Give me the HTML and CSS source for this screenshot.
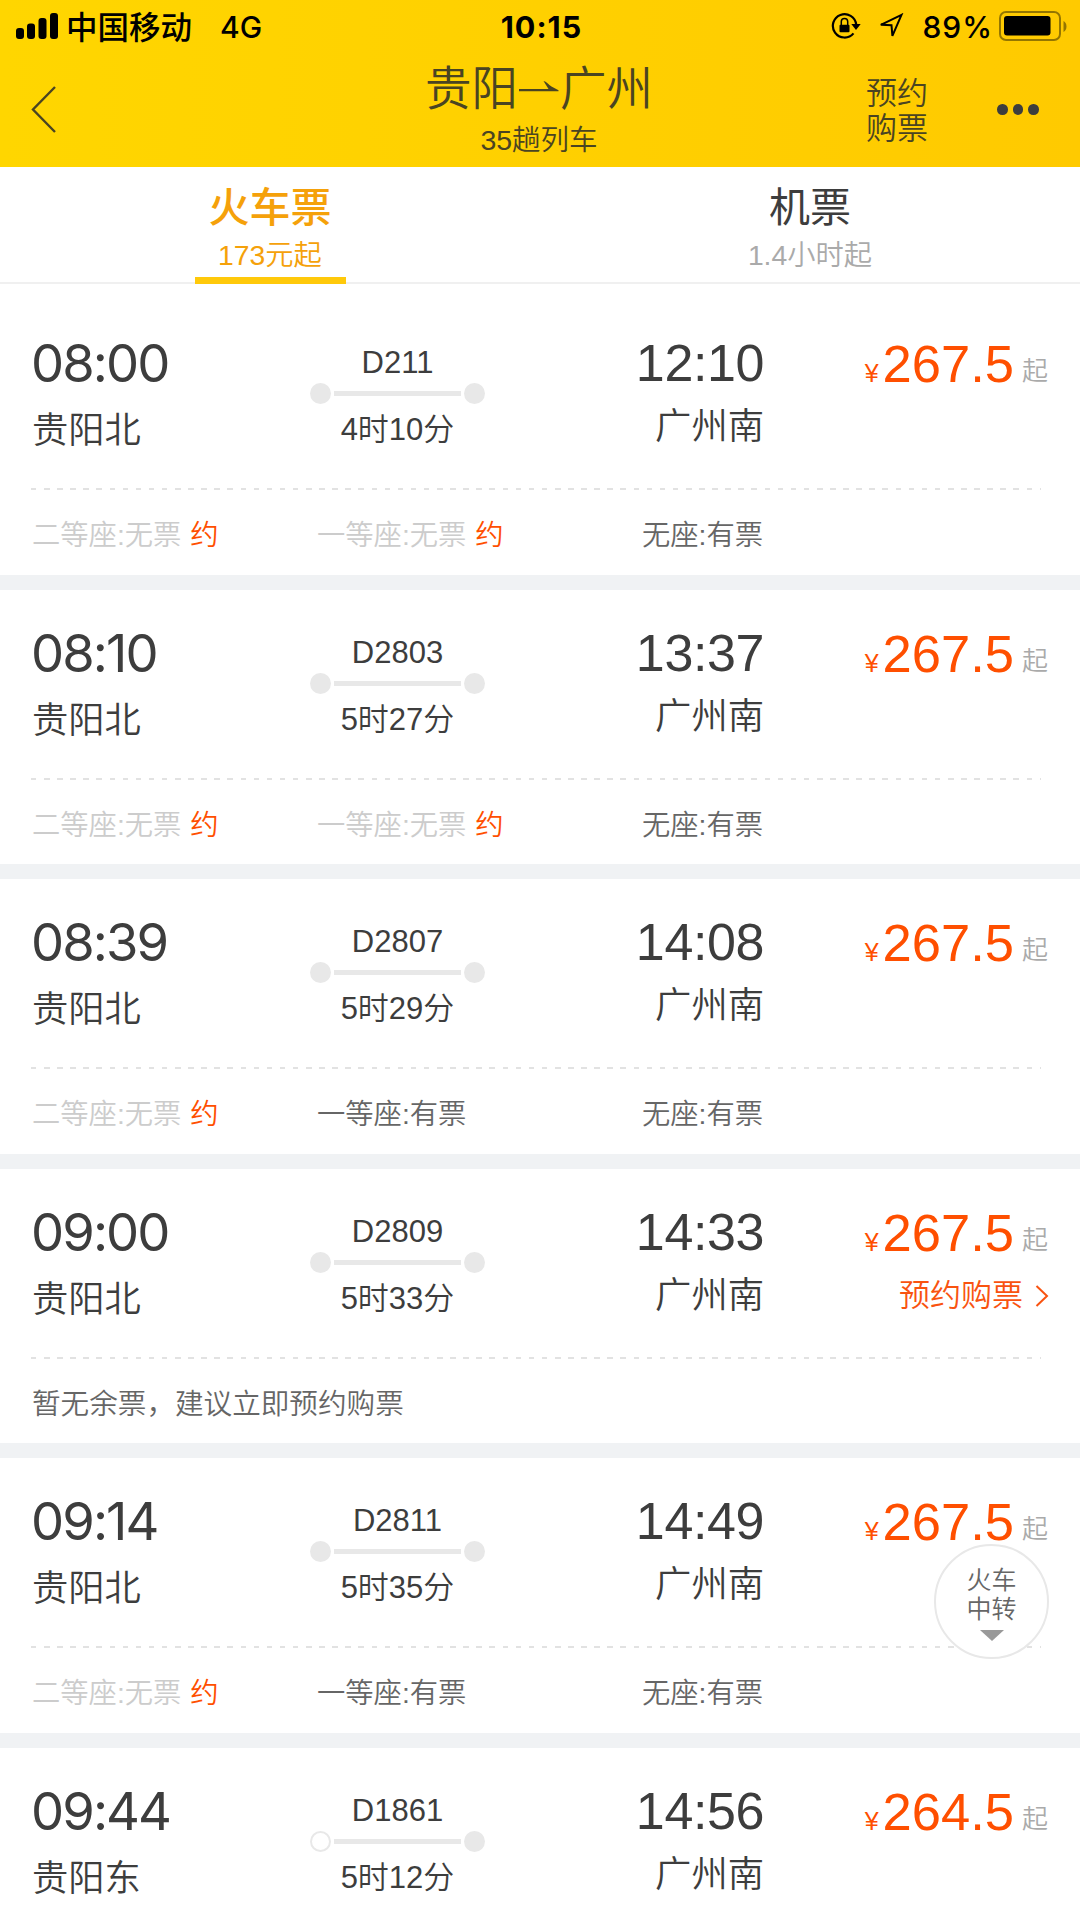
FILE: index.html
```html
<!DOCTYPE html>
<html lang="zh-CN">
<head>
  <meta charset="UTF-8" />
  <meta name="viewport" content="width=device-width, initial-scale=1.0"/>
  <title>贵阳→广州 火车票</title>
  <link rel="stylesheet" href="styles.css">
</head>
<body>
  <header class="header">
    <div class="status">
      <div class="status-left">
        <svg class="signal" width="42" height="26" viewBox="0 0 42 26">
          <rect x="0" y="15" width="8" height="11" rx="3"/>
          <rect x="11" y="10.5" width="8" height="15.5" rx="3"/>
          <rect x="22.5" y="5" width="8" height="21" rx="3"/>
          <rect x="34" y="0" width="8" height="26" rx="3"/>
        </svg>
        <span class="carrier">中国移动</span>
        <span class="network">4G</span>
      </div>
      <div class="clock">10:15</div>
      <div class="status-right">
        <svg class="lock" width="30" height="28" viewBox="0 0 30 28">
          <path d="M22.5 21.4A11.7 11.7 0 1 1 25.2 12.5" fill="none" stroke="#000" stroke-width="2.2"/>
          <path d="M20.3 12h9.4L25 18z"/>
          <rect x="8.5" y="12.8" width="10" height="7.4" rx="1"/>
          <path d="M10.3 13V9.6a3.2 3.2 0 0 1 6.4 0V13" fill="none" stroke="#000" stroke-width="1.5"/>
        </svg>
        <svg class="location" width="26" height="26" viewBox="0 0 26 26">
          <path d="M23.5 1.8L2.8 11.8l10.7.4.9 10.6z" fill="none" stroke="#000" stroke-width="2" stroke-linejoin="miter"/>
        </svg>
        <span class="percent">89%</span>
        <svg class="battery" width="70" height="30" viewBox="0 0 70 30">
          <rect x="1" y="1" width="60" height="28" rx="6" fill="none" stroke="#000" stroke-opacity=".42" stroke-width="2"/>
          <rect x="5" y="5" width="46.500" height="19.500" rx="3"/>
          <path d="M64.500 10c4 2 4 9 0 11z" fill-opacity=".42"/>
        </svg>
      </div>
    </div>
    <div class="nav">
      <svg class="back" width="26" height="50" viewBox="0 0 26 50"><path d="M24 2L2 24.500L24 47" fill="none" stroke="#4a4422" stroke-width="2.400"/></svg>
      <div class="title">
        <h1>贵阳<svg width="40" height="14" viewBox="0 0 40 14"><path d="M0 9h29.500L24.500 1c3 .6 5 3.500 8 5.600l7 3.600v1.100H0z" fill="#4a4422"/></svg>广州</h1>
        <p>35趟列车</p>
      </div>
      <a class="reserve">预约<br>购票</a>
      <div class="more"><i></i><i></i><i></i></div>
    </div>
  </header>

  <div class="tabs">
    <div class="tab active">
      <b>火车票</b>
      <span>173元起</span>
    </div>
    <div class="tab">
      <b>机票</b>
      <span>1.4小时起</span>
    </div>
  </div>

  <main class="list">
    <section class="card">
      <div class="trip">
        <div class="from"><div class="time">08:00</div><div class="station">贵阳北</div></div>
        <div class="route"><div class="train">D211</div><div class="track"><i></i><s></s><i></i></div><div class="duration">4时10分</div></div>
        <div class="to"><div class="time">12:10</div><div class="station">广州南</div></div>
        <div class="side"><div class="price"><em>¥</em><strong>267.5</strong><small>起</small></div></div>
      </div>
      <div class="divider"></div>
      <div class="seats">
        <span class="none">二等座:无票<u>约</u></span>
        <span class="none">一等座:无票<u>约</u></span>
        <span>无座:有票</span>
      </div>
    </section>

    <section class="card">
      <div class="trip">
        <div class="from"><div class="time">08:10</div><div class="station">贵阳北</div></div>
        <div class="route"><div class="train">D2803</div><div class="track"><i></i><s></s><i></i></div><div class="duration">5时27分</div></div>
        <div class="to"><div class="time">13:37</div><div class="station">广州南</div></div>
        <div class="side"><div class="price"><em>¥</em><strong>267.5</strong><small>起</small></div></div>
      </div>
      <div class="divider"></div>
      <div class="seats">
        <span class="none">二等座:无票<u>约</u></span>
        <span class="none">一等座:无票<u>约</u></span>
        <span>无座:有票</span>
      </div>
    </section>

    <section class="card">
      <div class="trip">
        <div class="from"><div class="time">08:39</div><div class="station">贵阳北</div></div>
        <div class="route"><div class="train">D2807</div><div class="track"><i></i><s></s><i></i></div><div class="duration">5时29分</div></div>
        <div class="to"><div class="time">14:08</div><div class="station">广州南</div></div>
        <div class="side"><div class="price"><em>¥</em><strong>267.5</strong><small>起</small></div></div>
      </div>
      <div class="divider"></div>
      <div class="seats">
        <span class="none">二等座:无票<u>约</u></span>
        <span>一等座:有票</span>
        <span>无座:有票</span>
      </div>
    </section>

    <section class="card">
      <div class="trip">
        <div class="from"><div class="time">09:00</div><div class="station">贵阳北</div></div>
        <div class="route"><div class="train">D2809</div><div class="track"><i></i><s></s><i></i></div><div class="duration">5时33分</div></div>
        <div class="to"><div class="time">14:33</div><div class="station">广州南</div></div>
        <div class="side">
          <div class="price"><em>¥</em><strong>267.5</strong><small>起</small></div>
          <a class="book">预约购票<svg width="14" height="22" viewBox="0 0 14 22"><path d="M1.500 1l10.500 10L1.500 21" fill="none" stroke="#f95310" stroke-width="2"/></svg></a>
        </div>
      </div>
      <div class="divider"></div>
      <div class="seats notice">暂无余票，建议立即预约购票</div>
    </section>

    <section class="card">
      <div class="trip">
        <div class="from"><div class="time">09:14</div><div class="station">贵阳北</div></div>
        <div class="route"><div class="train">D2811</div><div class="track"><i></i><s></s><i></i></div><div class="duration">5时35分</div></div>
        <div class="to"><div class="time">14:49</div><div class="station">广州南</div></div>
        <div class="side"><div class="price"><em>¥</em><strong>267.5</strong><small>起</small></div></div>
      </div>
      <div class="divider"></div>
      <div class="seats">
        <span class="none">二等座:无票<u>约</u></span>
        <span>一等座:有票</span>
        <span>无座:有票</span>
      </div>
    </section>

    <section class="card last">
      <div class="trip">
        <div class="from"><div class="time">09:44</div><div class="station">贵阳东</div></div>
        <div class="route"><div class="train">D1861</div><div class="track"><i class="hollow"></i><s></s><i></i></div><div class="duration">5时12分</div></div>
        <div class="to"><div class="time">14:56</div><div class="station">广州南</div></div>
        <div class="side"><div class="price"><em>¥</em><strong>264.5</strong><small>起</small></div></div>
      </div>
    </section>
  </main>

  <!-- floating transfer button -->
  <div class="transfer">
    火车<br>中转
    <svg width="24" height="11" viewBox="0 0 24 11"><path d="M0 0h24L12 11z" fill="#999"/></svg>
  </div>
</body>
</html>
```

FILE: styles.css
```css
* {
  box-sizing: border-box;
}
body {
  margin: 0;
  position: relative;
  width: 1080px;
  height: 1920px;
  overflow: hidden;
  background: #fff;
  color: #3d3d3d;
  font-family: "Liberation Sans", "Noto Sans CJK SC", sans-serif;
  font-weight: 350;
}
h1, p {
  margin: 0;
  font-weight: 350;
}
i, em, small, b, strong, u, s {
  font-style: normal;
  font-weight: inherit;
  text-decoration: none;
}
svg {
  display: block;
}

/* header */
.header {
  height: 166.5px;
  background: linear-gradient(90deg, #ffd600, #ffca00);
  color: #4a4422;
}
.status {
  display: grid;
  grid-template-columns: 1fr auto 1fr;
  height: 54px;
  padding: 0 12px 0 16px;
  color: #000;
  font-family: Inter, "Noto Sans CJK SC", sans-serif;
  font-weight: 500;
  line-height: 54px;
}
.status-left, .status-right {
  display: flex;
}
.status-right {
  justify-content: flex-end;
}
.signal {
  margin-top: 13px;
}
.carrier {
  margin-left: 8px;
  font-size: 31.5px;
  line-height: 56px;
}
.network {
  margin-left: 28px;
  font-size: 30px;
}
.clock {
  padding-right: 1px;
  font-size: 30.5px;
  font-weight: 700;
  letter-spacing: 1px;
}
.lock {
  margin: 12px 17px 0 0;
}
.location {
  margin: 13px 18px 0 0;
}
.percent {
  margin-right: 6px;
  font-size: 30px;
  letter-spacing: 1px;
}
.battery {
  margin: 11px -1px 0 0;
}
.nav {
  display: grid;
  grid-template-columns: 425px 228px 213px 60px 1fr;
  height: 112px;
}
.back {
  margin: 31px 0 0 31px;
}
.title {
  text-align: center;
}
.title h1 {
  display: flex;
  justify-content: center;
  align-items: center;
  height: 56px;
  padding-top: 13px;
  font-size: 46.5px;
  line-height: 46px;
  white-space: nowrap;
}
.title h1 svg {
  margin: 0 1px 4px;
}
.title p {
  margin-top: 14px;
  font-size: 28.5px;
  line-height: 32px;
}
.reserve {
  grid-column: 4;
  padding-top: 21.5px;
  font-size: 31px;
  line-height: 35.5px;
  white-space: nowrap;
}
.more {
  display: flex;
  gap: 5px;
  padding: 50px 0 0 71px;
}
.more i {
  width: 10.5px;
  height: 10.5px;
  border-radius: 50%;
  background: #3d3d3d;
}

/* tabs */
.tabs {
  display: grid;
  grid-template-columns: 1fr 1fr;
  height: 117.5px;
  box-shadow: inset 0 -2px #f0f0f0;
}
.tab {
  display: flex;
  flex-direction: column;
  align-items: center;
  width: 151px;
  margin: 0 auto;
  padding-top: 18px;
  white-space: nowrap;
}
.tab b {
  font-size: 41px;
  font-weight: 400;
  line-height: 46px;
}
.tab span {
  margin-top: 7px;
  color: #aaa;
  font-size: 28.3px;
  line-height: 34px;
}
.tab.active {
  border-bottom: 7px solid #ffc90a;
}
.tab.active b {
  color: #f5a10a;
  font-weight: 500;
}
.tab.active span {
  color: #f5a10a;
}

/* train list */
.list {
  padding-top: 16px;
}
.card {
  height: 289.6px;
  border-bottom: 15.3px solid #f0f2f4;
}
.card.last {
  height: 172px;
  border-bottom: 0;
  overflow: hidden;
}
.trip {
  display: grid;
  grid-template-columns: 278px 175px 279px 284px;
  height: 188px;
  padding: 35px 32px 0;
}
.time {
  font-size: 52px;
  line-height: 57px;
  letter-spacing: -0.4px;
}
.from .time {
  margin-left: -1px;
  font-family: Inter, sans-serif;
  font-weight: 400;
  font-size: 52.5px;
  letter-spacing: -1.9px;
}
.station {
  margin-top: 15px;
  font-size: 36.3px;
  line-height: 48px;
}
.to {
  text-align: right;
}
.to .station {
  margin-top: 11px;
}
.route {
  text-align: center;
}
.train {
  margin-top: 11px;
  font-size: 31px;
  line-height: 34px;
}
.track {
  display: flex;
  align-items: center;
  gap: 3px;
  height: 21px;
  margin-top: 3px;
}
.track i {
  width: 21px;
  height: 21px;
  border-radius: 50%;
  background: #e8e8e8;
}
.track i.hollow {
  background: #fff;
  border: 2.5px solid #e8e8e8;
}
.track s {
  flex: 1;
  height: 5px;
  background: #e8e8e8;
}
.duration {
  margin-top: 6px;
  font-size: 31px;
  line-height: 40px;
}
.price {
  display: flex;
  justify-content: flex-end;
  align-items: baseline;
  height: 56px;
  color: #ff4f00;
  line-height: 57px;
}
.price em {
  font-size: 25px;
}
.price strong {
  margin-left: 4px;
  font-size: 52.5px;
}
.price small {
  margin-left: 8px;
  color: #aaa;
  font-size: 26px;
  line-height: 30px;
  position: relative;
  top: -2px;
}
.book {
  display: flex;
  justify-content: flex-end;
  align-items: center;
  gap: 12px;
  margin: 15px -1px 0 0;
  color: #f95310;
  font-size: 31px;
  line-height: 42px;
}
.divider {
  width: 1010px;
  height: 2px;
  margin-left: 31px;
  background: repeating-linear-gradient(90deg, #e2e2e2 0 5.5px, transparent 5.5px 13.1px);
}
.seats {
  display: grid;
  grid-template-columns: 285px 325px auto;
  padding: 25px 32px 0;
  color: #666;
  font-size: 28.3px;
  line-height: 40px;
}
.seats .none {
  color: #ccc;
}
.seats u {
  margin-left: 9px;
  color: #ff4f00;
}
.seats.notice {
  display: block;
  font-size: 28.6px;
}

/* floating button */
.transfer {
  position: absolute;
  top: 1544px;
  left: 934px;
  width: 115px;
  height: 115px;
  padding-top: 20px;
  border: 2px solid #e8e8e8;
  border-radius: 50%;
  background: #fff;
  color: #666;
  font-size: 25px;
  line-height: 29px;
  text-align: center;
}
.transfer svg {
  margin: 6px auto 0;
}
```
